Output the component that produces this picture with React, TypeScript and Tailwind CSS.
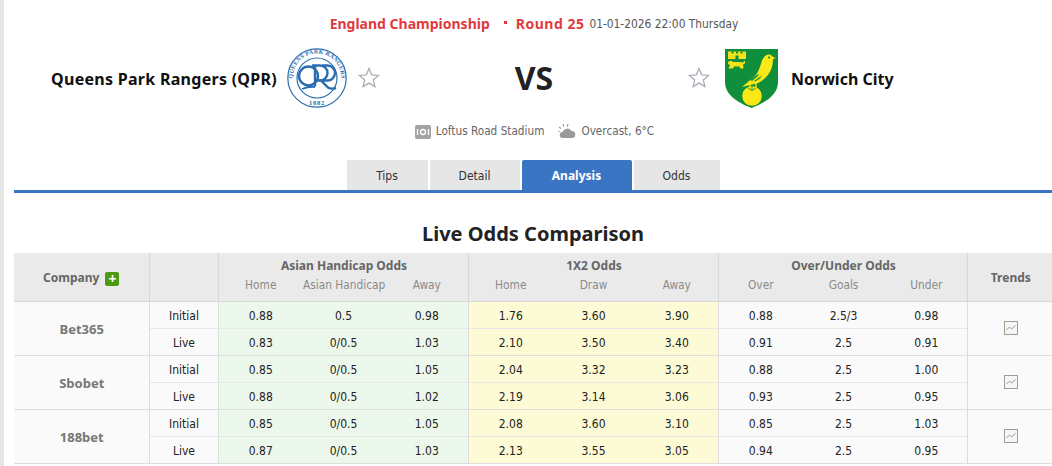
const font = "font-['Noto_Sans','Open_Sans',sans-serif]";
const thin = "font-['DejaVu_Sans_Condensed','Noto_Sans',sans-serif]";

type Line = { label: string; ah: string[]; x12: string[]; ou: string[] };
type Row = { company: string; initial: Line; live: Line };

const rows: Row[] = [
    {
        company: "Bet365",
        initial: { label: "Initial", ah: ["0.88", "0.5", "0.98"], x12: ["1.76", "3.60", "3.90"], ou: ["0.88", "2.5/3", "0.98"] },
        live: { label: "Live", ah: ["0.83", "0/0.5", "1.03"], x12: ["2.10", "3.50", "3.40"], ou: ["0.91", "2.5", "0.91"] },
    },
    {
        company: "Sbobet",
        initial: { label: "Initial", ah: ["0.85", "0/0.5", "1.05"], x12: ["2.04", "3.32", "3.23"], ou: ["0.88", "2.5", "1.00"] },
        live: { label: "Live", ah: ["0.88", "0/0.5", "1.02"], x12: ["2.19", "3.14", "3.06"], ou: ["0.93", "2.5", "0.95"] },
    },
    {
        company: "188bet",
        initial: { label: "Initial", ah: ["0.85", "0/0.5", "1.05"], x12: ["2.08", "3.60", "3.10"], ou: ["0.85", "2.5", "1.03"] },
        live: { label: "Live", ah: ["0.87", "0/0.5", "1.03"], x12: ["2.13", "3.55", "3.05"], ou: ["0.94", "2.5", "0.95"] },
    },
];

function Star() {
    return (
        <svg width="22" height="22" viewBox="0 0 22 22" fill="#fff" stroke="#a9aeb8" strokeWidth="1.3">
            <path d="M11 1.5l2.7 6.3 6.8.6-5.2 4.5 1.6 6.7L11 16.1l-5.9 3.5 1.6-6.7L1.5 8.4l6.800-.6z" />
        </svg>
    );
}

function QprLogo() {
    return (
        <svg width="60" height="60" viewBox="0 0 60 60">
            <defs>
                <path id="qpr-top" d="M6.8 37A24.300 24.300 0 1 1 53.200 37" />
            </defs>
            <circle cx="30" cy="30" r="29.2" fill="#fff" stroke="#2a6db0" strokeWidth="1.2" />
            <circle cx="30" cy="30" r="20" fill="#fff" stroke="#2a6db0" strokeWidth="1.2" />
            <text fill="#2a6db0" fontSize="5.900" fontWeight="700" fontFamily="Liberation Serif, serif" letterSpacing="0.3">
                <textPath href="#qpr-top" startOffset="50%" textAnchor="middle">QUEENS PARK RANGERS</textPath>
            </text>
            <text x="30" y="56.5" fill="#2a6db0" fontSize="6.500" fontWeight="700" fontFamily="Liberation Serif, serif" textAnchor="middle" letterSpacing="0.8">1882</text>
            <g fill="none" stroke="#2a6db0" strokeWidth="2.400">
                <circle cx="21.500" cy="28" r="9.500" />
                <path d="M28 17.500v21" />
                <path d="M25 17.500h8a7.500 7.500 0 0 1 0 15h-5" />
                <path d="M35 17.500h5.500a7.500 7.500 0 0 1 0 15h-6.500l7 7q3 2 8 .500" />
                <path d="M15 41q8 -3 13 -2" strokeWidth="1.800" />
            </g>
        </svg>
    );
}

function NorwichCrest() {
    return (
        <svg width="53" height="59" viewBox="0 0 53 59">
            <path d="M0 0h53v33c0 12-11 20-26.500 26C11 53 0 45 0 33z" fill="#0f8f3c" />
            {/* castle */}
            <path d="M3 2.500h18v7.500h-18z" fill="#f4e21a" />
            <path d="M6.500 2.500h2v2h-2zM11 2.500h2v2h-2zM15.500 2.500h2v2h-2zM10.500 6.500h3v3.500h-3z" fill="#0f8f3c" />
            {/* lion */}
            <path d="M3 13l3-1.500 2 1.500 7 0 3 .500 2-2v3l-2 1 .500 4h-3l-1-2H9l-1 2H3.500l1.500-3.500-2-1z" fill="#f4e21a" />
            {/* canary */}
            <path d="M17 38L30 27C33 24 34 20 36 15C37 10 40 5.500 44 5.500C46 5.500 47 7 48 8L51 9L48 10C48 18 45 25 39 30C35 34 30 35 25 36z" fill="#fbe816" />
            <path d="M25 31l9-6.500-1 2.500-6 5zM29 32l8-5.500-2 3-5 3z" fill="#0f8f3c" />
            <circle cx="44" cy="8.500" r="1.100" fill="#0f8f3c" />
            <path d="M25 35v4M31 34v5" stroke="#fbe816" strokeWidth="1.3" />
            <circle cx="27" cy="47" r="9.800" fill="#fbe816" />
            <path d="M27 37.500v4M23 39l4 2.500 4-2.500" stroke="#0f8f3c" strokeWidth="0.8" fill="none" />
        </svg>
    );
}

function TrendIcon() {
    return (
        <svg width="14" height="14" viewBox="0 0 14 14" fill="none">
            <rect x="0.500" y="0.500" width="13" height="13" fill="#f6f6f6" stroke="#a59a90" />
            <path d="M2.500 9l3-3 2 2 4-3.500" stroke="#9a9a9a" strokeWidth="1" />
        </svg>
    );
}

function Cells({ values, bg }: { values: string[]; bg: string }) {
    return (
        <>
            {values.map((v, i) => (
                <td key={i} className={`${bg} ${i === 2 ? "border-r border-r-[#dddddd]" : ""} pt-[2px] pl-[2px] text-center`}>
                    {v}
                </td>
            ))}
        </>
    );
}

function OddsTable() {
    const sub = `${thin} whitespace-nowrap pl-[2px] font-normal text-[#8a8a8a] text-[11.8px] h-[23px] align-top`;
    return (
        <table className={`${thin} w-[1038px] table-fixed border-collapse text-xs text-[#222]`}>
            <colgroup>
                <col className="w-[135px]" />
                <col className="w-[69px]" />
                <col className="w-[83px]" />
                <col className="w-[83px]" />
                <col className="w-[84px]" />
                <col className="w-[83px]" />
                <col className="w-[83px]" />
                <col className="w-[84px]" />
                <col className="w-[83px]" />
                <col className="w-[83px]" />
                <col className="w-[83px]" />
                <col />
            </colgroup>
            <thead className={`${font} bg-[#eaeaea]`}>
                <tr className="h-[25px]">
                    <th rowSpan={2} className="border-r border-b border-[#d8d8d8] pt-[2px] text-[#666]">
                        Company
                        <span className="ml-[6px] inline-flex h-[14px] w-[14px] translate-y-[2px] items-center justify-center rounded-[2px] bg-[#4c9a12] text-sm leading-none text-white">+</span>
                    </th>
                    <th rowSpan={2} className="border-r border-b border-[#d8d8d8]" />
                    <th colSpan={3} className="border-r border-[#d8d8d8] pl-[2px] text-[#666]">Asian Handicap Odds</th>
                    <th colSpan={3} className="border-r border-[#d8d8d8] pl-[2px] text-[#666]">1X2 Odds</th>
                    <th colSpan={3} className="border-r border-[#d8d8d8] pl-[2px] text-[#666]">Over/Under Odds</th>
                    <th rowSpan={2} className="border-b border-[#d8d8d8] pt-[2px] pl-[2px] text-[#666]">Trends</th>
                </tr>
                <tr className="border-b border-[#d8d8d8]">
                    <th className={sub}>Home</th>
                    <th className={sub}>Asian Handicap</th>
                    <th className={`${sub} border-r border-[#d8d8d8]`}>Away</th>
                    <th className={sub}>Home</th>
                    <th className={sub}>Draw</th>
                    <th className={`${sub} border-r border-[#d8d8d8]`}>Away</th>
                    <th className={sub}>Over</th>
                    <th className={sub}>Goals</th>
                    <th className={`${sub} border-r border-[#d8d8d8]`}>Under</th>
                </tr>
            </thead>
            <tbody>
                {rows.map((row) =>
                    [row.initial, row.live].map((line, i) => (
                        <tr key={row.company + line.label} className={`h-[27px] border-b ${i === 0 ? "border-[#e8e8e8]" : "border-[#dedede]"}`}>
                            {i === 0 && (
                                <td rowSpan={2} className={`${font} border-r border-[#dddddd] bg-[#fafafa] pt-[4px] pl-[1px] text-center text-[13px] font-bold text-[#777]`}>
                                    {row.company}
                                </td>
                            )}
                            <td className="border-r border-[#dddddd] bg-[#fafafa] pt-[2px] pl-[1px] text-center">{line.label}</td>
                            <Cells values={line.ah} bg="bg-[#edf8ec]" />
                            <Cells values={line.x12} bg="bg-[#fdfbd6]" />
                            <Cells values={line.ou} bg="bg-[#fafafa]" />
                            {i === 0 && (
                                <td rowSpan={2} className="bg-[#fafafa]">
                                    <div className="flex justify-center pl-[2px]">
                                        <TrendIcon />
                                    </div>
                                </td>
                            )}
                        </tr>
                    ))
                )}
            </tbody>
        </table>
    );
}

export default function App() {
    const tabs = ["Tips", "Detail", "Analysis", "Odds"];
    const tabWidths = ["w-[81px]", "w-[90px]", "w-[110px]", "w-[86px]"];

    return (
        <div className={`${font} flex h-[466px] w-[1052px] overflow-hidden bg-white`}>
            {/* page gutter */}
            <div className="w-[4px] shrink-0 bg-[#e6e6e6]" />
            <div className="ml-[10px] w-[1038px] shrink-0">
                {/* League line */}
                <div className="flex h-[48px] items-center justify-center pl-[2px] text-sm font-bold text-[#e03a3e]">
                    <span>England Championship</span>
                    <span className="mr-[9px] ml-[14px] h-[3px] w-[3px] -translate-y-[2px] bg-[#e03a3e]" />
                    <span className="tracking-[0.5px]">Round 25</span>
                    <span className={`${thin} ml-[5px] text-[11.85px] font-normal text-[#555]`}>01-01-2026 22:00 Thursday</span>
                </div>

                {/* Teams */}
                <div className="flex h-[60px] items-center">
                    <div className="flex w-[366px] items-center justify-end">
                        <span className="translate-y-[1px] text-base font-bold tracking-[0.28px] text-[#111]">Queens Park Rangers (QPR)</span>
                        <div className="ml-[10px]"><QprLogo /></div>
                        <div className="ml-[11px]"><Star /></div>
                    </div>
                    <div className="w-[308px] text-center text-[32px] font-bold text-[#222]">VS</div>
                    <div className="flex items-center">
                        <Star />
                        <div className="ml-[15px]"><NorwichCrest /></div>
                        <span className="ml-[13px] translate-y-[1px] text-base font-bold text-[#111]">Norwich City</span>
                    </div>
                </div>

                {/* Venue and weather */}
                <div className={`${thin} mt-[13px] flex h-[22px] items-center justify-center pl-[3px] text-[11.7px] text-[#666]`}>
                    <svg width="16" height="14" viewBox="0 0 16 14" className="mr-[5px]">
                        <rect width="16" height="14" rx="2" fill="#a3a3a3" />
                        <circle cx="8" cy="7" r="2.500" fill="none" stroke="#fff" strokeWidth="1.300" />
                        <path d="M2.500 4v6M13.500 4v6" stroke="#fff" strokeWidth="1.300" />
                    </svg>
                    <span>Loftus Road Stadium</span>
                    <svg width="18" height="16" viewBox="0 0 18 16" className="ml-[14px] mr-[5px]">
                        <path d="M5 14a3 3 0 0 1-.500-6 5 5 0 0 1 9-1 3.500 3.500 0 0 1 .500 7z" fill="#9a9a9a" />
                        <path d="M1 3l2 1.500M5 0l.8 2.500M10 0l-.8 2.500M0 7.500h1.500" stroke="#9a9a9a" strokeWidth="1.200" />
                    </svg>
                    <span>Overcast, 6°C</span>
                </div>

                {/* Tabs */}
                <div className={`${thin} mt-[17px] flex justify-center gap-[2px] border-b-[3px] border-[#3a75c4]`}>
                    {tabs.map((t, i) => (
                        <div
                            key={t}
                            className={`${tabWidths[i]} flex h-[30px] items-center justify-center pt-[2px] text-xs ${
                                t === "Analysis" ? `${font} rounded-t-[2px] bg-[#3a75c4] font-bold text-white` : "bg-[#e6e6e6] text-[#333]"
                            }`}
                        >
                            {t}
                        </div>
                    ))}
                </div>

                <h2 className="mt-[27px] mb-[5px] h-[28px] text-center text-xl leading-[28px] font-bold text-[#222]">Live Odds Comparison</h2>

                <OddsTable />
            </div>
        </div>
    );
}
